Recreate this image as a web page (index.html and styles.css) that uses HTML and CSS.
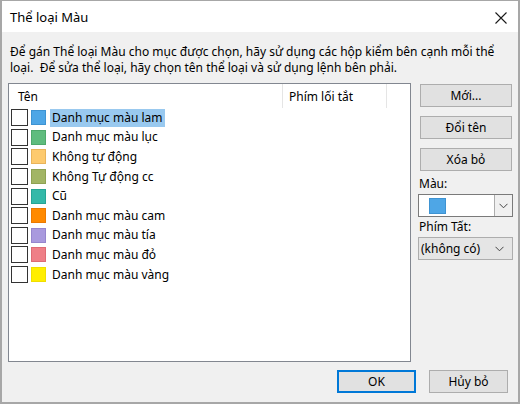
FILE: index.html
```html
<!DOCTYPE html>
<html lang="vi">
<head>
<meta charset="utf-8">
<link rel="stylesheet" href="styles.css">
</head>
<body>
<div class="dialog">
  <div class="titlebar">
    <span class="title">Thể loại Màu</span>
    <svg class="close" width="12" height="12" viewBox="0 0 12 12"><path d="M0.5 0.5 L11.5 11.5 M11.5 0.5 L0.5 11.5" stroke="#1a1a1a" stroke-width="1.1" fill="none"/></svg>
  </div>
  <div class="content">
    <p class="desc">Để gán Thể loại Màu cho mục được chọn, hãy sử dụng các hộp kiểm bên cạnh mỗi thể loại.&nbsp; Để sửa thể loại, hãy chọn tên thể loại và sử dụng lệnh bên phải.</p>
    <div class="main">
      <div class="list">
        <div class="list-head">
          <div class="col col-name">Tên</div>
          <div class="col col-key">Phím lối tắt</div>
          <div class="col col-rest"></div>
        </div>
        <div class="row"><span class="check"></span><span class="swatch sw-blue"></span><span class="label selected">Danh mục màu lam</span></div>
        <div class="row"><span class="check"></span><span class="swatch sw-green"></span><span class="label">Danh mục màu lục</span></div>
        <div class="row"><span class="check"></span><span class="swatch sw-peach"></span><span class="label">Không tự động</span></div>
        <div class="row"><span class="check"></span><span class="swatch sw-olive"></span><span class="label">Không Tự động cc</span></div>
        <div class="row"><span class="check"></span><span class="swatch sw-teal"></span><span class="label">Cũ</span></div>
        <div class="row"><span class="check"></span><span class="swatch sw-orange"></span><span class="label">Danh mục màu cam</span></div>
        <div class="row"><span class="check"></span><span class="swatch sw-purple"></span><span class="label">Danh mục màu tía</span></div>
        <div class="row"><span class="check"></span><span class="swatch sw-red"></span><span class="label">Danh mục màu đỏ</span></div>
        <div class="row"><span class="check"></span><span class="swatch sw-yellow"></span><span class="label">Danh mục màu vàng</span></div>
      </div>
      <div class="side">
        <button class="btn side-btn">Mới...</button>
        <button class="btn side-btn">Đổi tên</button>
        <button class="btn side-btn">Xóa bỏ</button>
        <div class="field-label">Màu:</div>
        <div class="combo color-combo">
          <span class="combo-value"><span class="swatch-big"></span></span>
          <span class="combo-arrow"><svg width="9" height="6" viewBox="0 0 9 6"><path d="M0.5 0.8 L4.5 4.8 L8.5 0.8" stroke="#444" stroke-width="1" fill="none"/></svg></span>
        </div>
        <div class="field-label">Phím Tất:</div>
        <div class="combo key-combo">
          <span class="combo-text">(không có)</span>
          <svg width="9" height="6" viewBox="0 0 9 6"><path d="M0.5 0.8 L4.5 4.8 L8.5 0.8" stroke="#444" stroke-width="1" fill="none"/></svg>
        </div>
      </div>
    </div>
    <div class="footer">
      <button class="btn foot-btn default">OK</button>
      <button class="btn foot-btn">Hủy bỏ</button>
    </div>
  </div>
</div>
</body>
</html>
```
FILE: styles.css
```css
html, body {
  margin: 0;
  padding: 0;
  background: #ffffff;
}
body {
  font-family: "Noto Sans", "Open Sans", sans-serif;
  font-size: 12px;
  color: #000;
}
.dialog {
  width: 520px;
  height: 404px;
  box-sizing: border-box;
  border: 2px solid #a7a7a7;
  border-top-width: 1px;
  background: #f0f0f0;
  display: flex;
  flex-direction: column;
}
.titlebar {
  height: 31px;
  background: #ffffff;
  display: flex;
  align-items: center;
  justify-content: space-between;
  padding: 0 8px 0 8px;
  flex: none;
}
.title {
  font-size: 13px;
  padding-top: 1px;
}
.close {
  margin-right: 3px;
  margin-top: 2px;
}
.content {
  flex: 1;
  display: flex;
  flex-direction: column;
  padding: 12px 8px 9px 6px;
}
.desc {
  margin: 0 0 7px 2px;
  line-height: 16px;
}
.main {
  display: flex;
  gap: 7px;
}
.list {
  width: 403px;
  height: 279px;
  box-sizing: border-box;
  background: #fff;
  border: 1px solid #828790;
  flex: none;
}
.list-head {
  display: flex;
  height: 24px;
  align-items: stretch;
}
.col {
  display: flex;
  align-items: center;
  padding-left: 9px;
}
.col-name {
  width: 264px;
  border-right: 1px solid #e5e5e5;
}
.col-key {
  width: 97px;
  padding-left: 6px;
  border-right: 1px solid #e5e5e5;
}
.col-rest {
  flex: 1;
}
.row {
  height: 19.6px;
  display: flex;
  align-items: center;
  padding-left: 2px;
}
.check {
  width: 15px;
  height: 15px;
  border: 1px solid #333333;
  background: #fff;
  flex: none;
}
.swatch {
  width: 13px;
  height: 13px;
  margin-left: 3px;
  border: 1px solid;
  flex: none;
}
.sw-blue { background: #4ea6e6; border-color: #3e93d2; }
.sw-green { background: #5fbc7e; border-color: #4ea96c; }
.sw-peach { background: #fdca6e; border-color: #e9b45a; }
.sw-olive { background: #a2b565; border-color: #8fa253; }
.sw-teal { background: #34b9a9; border-color: #26a595; }
.sw-orange { background: #ff8a00; border-color: #ec7a00; }
.sw-purple { background: #a99ade; border-color: #9686cd; }
.sw-red { background: #ef7f87; border-color: #de6b74; }
.sw-yellow { background: #ffee00; border-color: #f0de00; }
.label {
  margin-left: 4px;
  padding: 0 2px 0 2px;
  line-height: 18px;
}
.label.selected {
  background: #99c9ef;
}
.side {
  width: 94px;
  display: flex;
  flex-direction: column;
  padding-top: 1px;
}
.btn {
  font-family: inherit;
  font-size: 12px;
  color: #000;
  background: #e1e1e1;
  border: 1px solid #adadad;
  height: 23px;
  padding: 0;
  margin: 0;
}
.side-btn {
  width: 92px;
  margin-left: 2px;
  margin-bottom: 9px;
}
.side-btn:last-of-type {
  margin-bottom: 3px;
}
.field-label {
  line-height: 20px;
  padding-left: 1px;
}
.combo {
  height: 23px;
  box-sizing: border-box;
  display: flex;
  align-items: center;
}
.color-combo {
  width: 95px;
  background: #fff;
  border: 1px solid #7a7a7a;
}
.combo-value {
  flex: 1;
  height: 100%;
  display: flex;
  align-items: center;
  padding-left: 10px;
}
.swatch-big {
  width: 15px;
  height: 14px;
  background: #4ea6e6;
  border: 1px solid #3e93d2;
}
.combo-arrow {
  width: 18px;
  height: 100%;
  box-sizing: border-box;
  border-left: 1px solid #adadad;
  background: #f0f0f0;
  display: flex;
  align-items: center;
  justify-content: center;
}
.key-combo {
  width: 95px;
  background: #e5e5e5;
  border: 1px solid #adadad;
  justify-content: space-between;
  padding: 0 8px 0 2px;
}
.footer {
  margin-top: auto;
  display: flex;
  justify-content: flex-end;
  gap: 13px;
  padding-right: 2px;
}
.foot-btn {
  width: 79px;
}
.foot-btn.default {
  border: 2px solid #0078d7;
}
```
